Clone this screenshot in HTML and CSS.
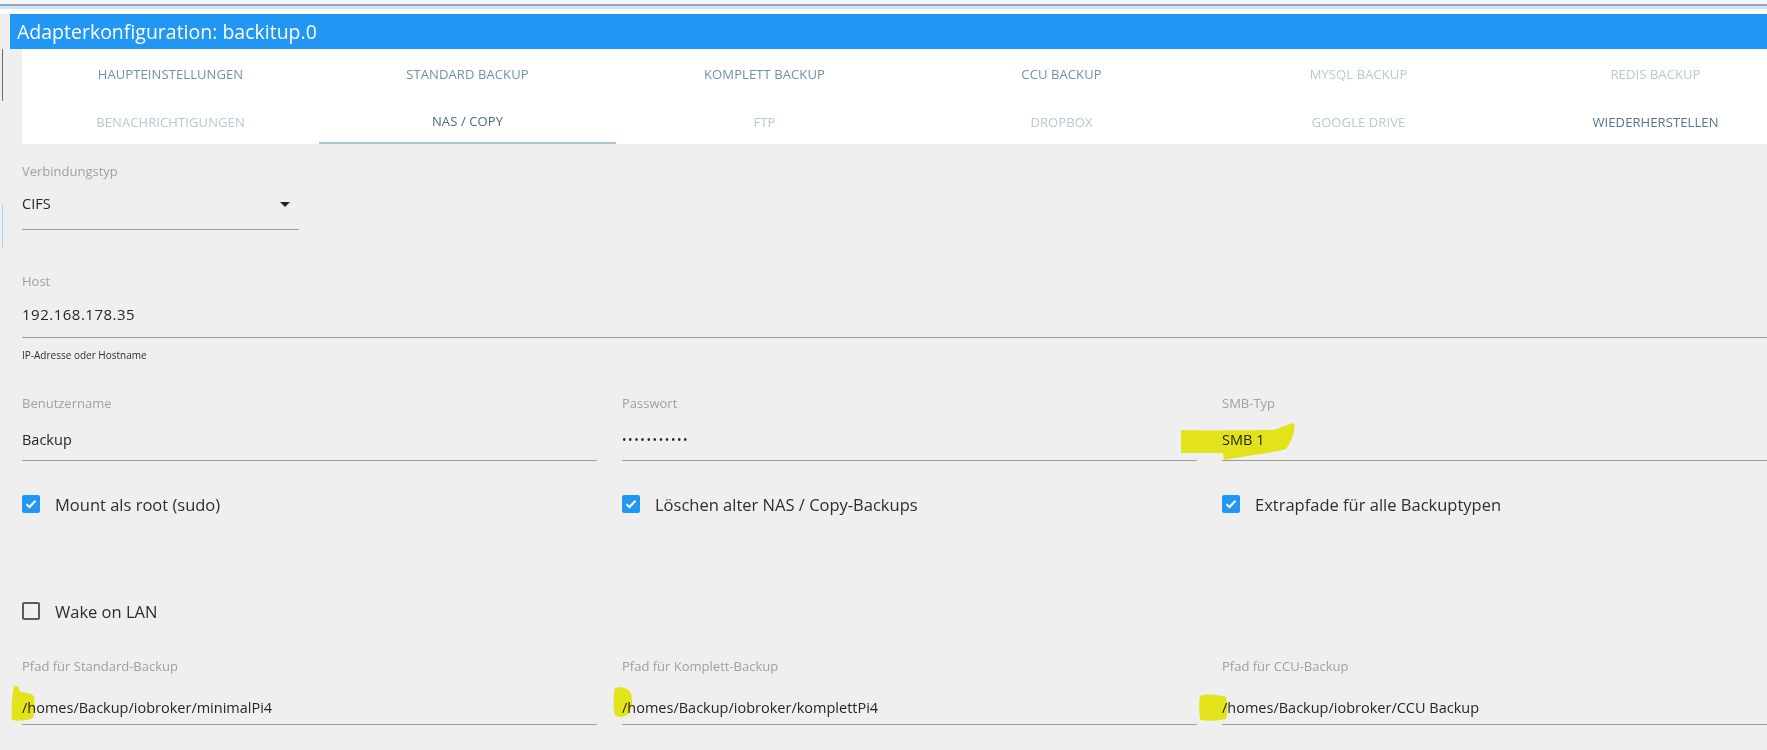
FILE: index.html
```html
<!DOCTYPE html>
<html lang="de">
<head>
<meta charset="utf-8">
<title>Adapterkonfiguration: backitup.0</title>
<link rel="stylesheet" href="styles.css">
</head>
<body>
<div class="page">
  <div class="topbar"></div>
  <div class="title">Adapterkonfiguration: backitup.0</div>
  <div class="tabs-wrap">
    <div class="side"></div>
    <nav class="tabs">
      <div class="tab">Haupteinstellungen</div>
      <div class="tab">Standard Backup</div>
      <div class="tab">Komplett Backup</div>
      <div class="tab">CCU Backup</div>
      <div class="tab off">MySQL Backup</div>
      <div class="tab off">Redis Backup</div>
      <div class="tab off">Benachrichtigungen</div>
      <div class="tab active">NAS / Copy</div>
      <div class="tab off">FTP</div>
      <div class="tab off">Dropbox</div>
      <div class="tab off">Google Drive</div>
      <div class="tab strong">Wiederherstellen</div>
    </nav>
  </div>

  <form class="form">
    <div class="field select-field">
      <div class="label">Verbindungstyp</div>
      <div class="value">
        <span>CIFS</span>
        <svg class="caret" width="10" height="5" viewBox="0 0 10 5"><path d="M0 0 L10 0 L5 5 Z" fill="#222"/></svg>
      </div>
    </div>

    <div class="field host-field">
      <div class="label">Host</div>
      <div class="value host-value">192.168.178.35</div>
      <div class="helper">IP-Adresse oder Hostname</div>
    </div>

    <div class="row fields-row">
      <div class="field">
        <div class="label">Benutzername</div>
        <div class="value">Backup</div>
      </div>
      <div class="field">
        <div class="label">Passwort</div>
        <div class="value dots">•••••••••••</div>
      </div>
      <div class="field marked">
        <div class="label">SMB-Typ</div>
        <div class="value">SMB 1</div>
        <svg class="mark mark-smb" width="120" height="42" viewBox="0 0 120 42"><path d="M3 9 C30 10 70 9 95 9 C102 7 110 3 116 2 C118 10 113 21 108 28 C96 32 70 34 46 39 L45 32 C30 32 14 32 3 32 Z" fill="#f3f31c"/></svg>
      </div>
    </div>

    <div class="row check-row">
      <label class="check"><span class="box on"><svg width="12" height="10" viewBox="0 0 12 10"><path d="M1.5 5.2 L4.5 8 L10.5 1.8" fill="none" stroke="#fff" stroke-width="2"/></svg></span>Mount als root (sudo)</label>
      <label class="check"><span class="box on"><svg width="12" height="10" viewBox="0 0 12 10"><path d="M1.5 5.2 L4.5 8 L10.5 1.8" fill="none" stroke="#fff" stroke-width="2"/></svg></span>Löschen alter NAS / Copy-Backups</label>
      <label class="check"><span class="box on"><svg width="12" height="10" viewBox="0 0 12 10"><path d="M1.5 5.2 L4.5 8 L10.5 1.8" fill="none" stroke="#fff" stroke-width="2"/></svg></span>Extrapfade für alle Backuptypen</label>
    </div>

    <div class="row wol-row">
      <label class="check"><span class="box"></span>Wake on LAN</label>
    </div>

    <div class="row fields-row path-row">
      <div class="field marked">
        <div class="label">Pfad für Standard-Backup</div>
        <div class="value">/homes/Backup/iobroker/minimalPi4</div>
        <svg class="mark mark-p1" width="26" height="38" viewBox="0 0 26 38"><path d="M4 2 C8 1 9 4 10 8 C14 8 20 9 24 12 C25 20 25 28 23 34 C16 37 8 37 2 36 C1 26 2 12 4 2 Z" fill="#f3f31c"/></svg>
      </div>
      <div class="field marked">
        <div class="label">Pfad für Komplett-Backup</div>
        <div class="value">/homes/Backup/iobroker/komplettPi4</div>
        <svg class="mark mark-p2" width="22" height="34" viewBox="0 0 22 34"><path d="M3 3 C9 1 16 3 19 8 C21 16 20 24 16 29 C11 33 6 33 3 30 C1 22 1 10 3 3 Z" fill="#f3f31c"/></svg>
      </div>
      <div class="field marked">
        <div class="label">Pfad für CCU-Backup</div>
        <div class="value">/homes/Backup/iobroker/CCU Backup</div>
        <svg class="mark mark-p3" width="32" height="30" viewBox="0 0 32 30"><path d="M2 4 C10 1 20 3 28 5 C30 12 30 20 28 27 C20 29 10 29 2 28 C1 20 1 10 2 4 Z" fill="#f3f31c"/></svg>
      </div>
    </div>
  </form>
</div>
</body>
</html>
```

FILE: styles.css
```css
* { box-sizing: border-box; }

html, body {
  margin: 0;
  padding: 0;
  width: 1767px;
  height: 750px;
  overflow: hidden;
  background: #efefef;
  font-family: "Open Sans", "Noto Sans", "DejaVu Sans", sans-serif;
  color: #2a2a2a;
}

.page {
  width: 1830px;
  position: relative;
}

.topbar {
  height: 14px;
  background: linear-gradient(to bottom, #f5f7f9 0 4px, #8ea6bc 4px 6px, #d5e4f0 6px 9px, #fbfcfd 9px 14px);
}

.title {
  margin-left: 10px;
  height: 35px;
  line-height: 35px;
  padding-left: 7px;
  background: #2196f3;
  color: #fff;
  font-size: 19.5px;
}

.tabs-wrap {
  display: flex;
  height: 95px;
}

.side {
  width: 22px;
  flex: none;
  position: relative;
}

.side::before {
  content: "";
  position: absolute;
  left: 2px;
  top: 0;
  width: 1px;
  height: 52px;
  background: #6b6b6b;
}

.tabs {
  flex: 1;
  background: #fff;
  display: grid;
  grid-template-columns: repeat(6, 297px);
  grid-template-rows: 50px 45px;
}

.tab {
  display: flex;
  align-items: center;
  justify-content: center;
  text-transform: uppercase;
  font-size: 13px;
  color: #6f92aa;
  letter-spacing: 0.1px;
}

.tab.off { color: #b7c9d5; }
.tab.strong { color: #55758c; }
.tab.active {
  color: #4d6b82;
  border-bottom: 2px solid #a9c6d8;
}

.form {
  margin: 0;
  padding: 20px 0 0 22px;
  position: relative;
}

.form::before {
  content: "";
  position: absolute;
  left: 2px;
  top: 60px;
  width: 1px;
  height: 44px;
  background: #a8d2ef;
}

.field { position: relative; }

.label {
  font-size: 13px;
  line-height: 14px;
  color: #a0a0a0;
}

.value {
  margin-top: 16px;
  font-size: 14.5px;
  line-height: 20px;
  padding-bottom: 13px;
  border-bottom: 1px solid #9c9c9c;
  color: #262626;
  position: relative;
}

.host-value {
  font-size: 15px;
  letter-spacing: 0.5px;
}

.select-field { width: 277px; }
.select-field .value {
  display: flex;
  align-items: center;
  justify-content: space-between;
  padding-right: 9px;
  padding-bottom: 15px;
}

.host-field { margin-top: 44px; }

.helper {
  margin-top: 10px;
  font-size: 10px;
  line-height: 14px;
  color: #2e2e2e;
}

.row {
  display: grid;
  grid-template-columns: repeat(3, 575px);
  column-gap: 25px;
}

.fields-row { margin-top: 34px; }
.fields-row .value {
  margin-top: 20px;
  padding-bottom: 10px;
}

.dots {
  font-size: 12px;
  letter-spacing: 1.6px;
}

.check-row { margin-top: 31px; }
.wol-row { margin-top: 83px; }
.path-row { margin-top: 36px; }
.path-row .value {
  margin-top: 25px;
  padding-bottom: 6px;
}

.check {
  display: flex;
  align-items: center;
  height: 24px;
  font-size: 16.5px;
  color: #2e2e2e;
}

.box {
  width: 18px;
  height: 18px;
  margin-right: 15px;
  border: 2px solid #5a5a5a;
  border-radius: 2px;
  display: flex;
  align-items: center;
  justify-content: center;
  flex: none;
}

.box.on {
  background: #2196f3;
  border-color: #2196f3;
}

.mark {
  position: absolute;
  mix-blend-mode: multiply;
  pointer-events: none;
}

.mark-smb { left: -44px; top: 25px; }
.mark-p1 { left: -12px; top: 25px; }
.mark-p2 { left: -10px; top: 26px; }
.mark-p3 { left: -24px; top: 33px; }
```
